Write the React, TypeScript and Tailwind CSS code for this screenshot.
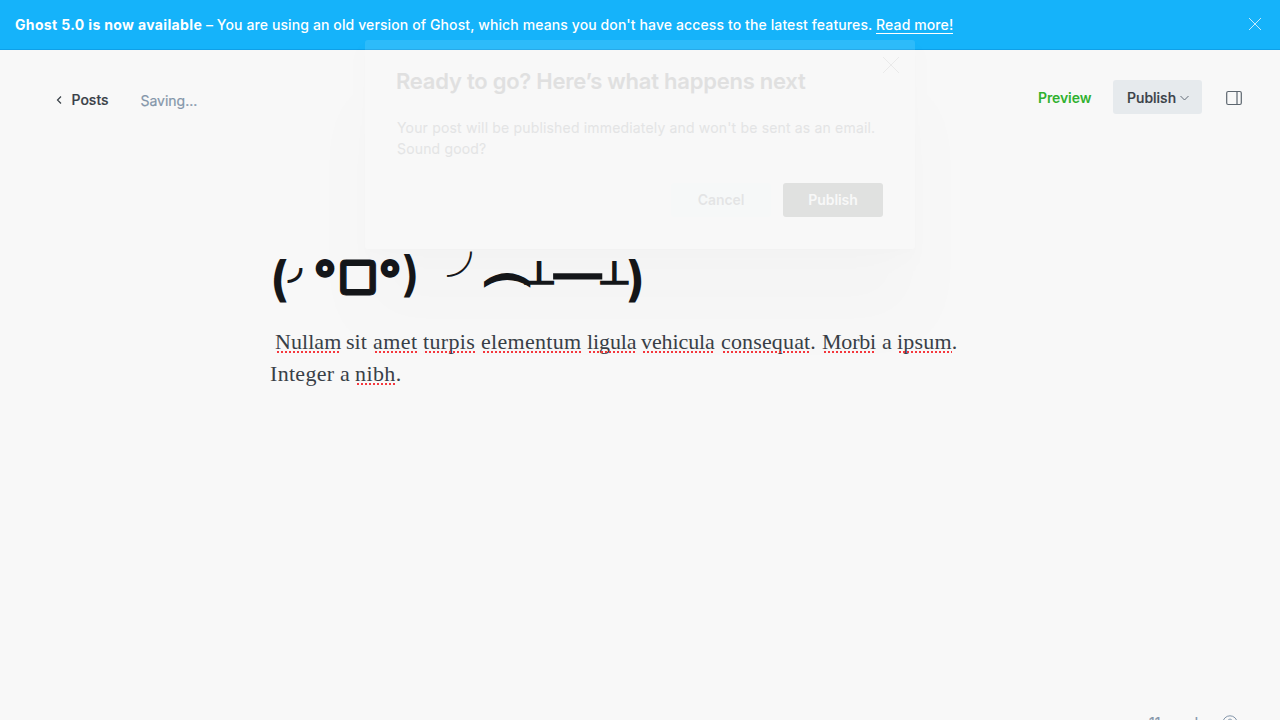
import type { ReactNode } from 'react';

function Word({ children, w, bad = false, end = '' }: { children: ReactNode; w: string; bad?: boolean; end?: string }) {
  return (
    <span className={`flex h-[22px] whitespace-pre ${w}`}>
      {bad ? (
        <span className="relative h-[22px]">{children}<span className="absolute top-[20px] right-0 left-[2px] h-[2px] bg-[repeating-linear-gradient(90deg,#f5383e_0_2px,transparent_2px_4px)]" /></span>
      ) : children}
      {end}
    </span>
  );
}

function CloseIcon({ className }: { className: string }) {
  return (
    <svg viewBox="0 0 16 16" className={className} fill="none" stroke="currentColor"><path d="M0 0 16 16M16 0 0 16" /></svg>
  );
}

export default function App() {
  return (
    <div className="relative h-[720px] w-[1280px] overflow-hidden bg-[#f8f8f8] font-['Inter',sans-serif] text-[#394047]">
      <div className="flex h-[50px] items-center justify-between border-b border-[#0fa0e8] bg-[#15b3fa] pl-[15px] pr-[19px] text-white">
        <p className="text-[14px] font-medium tracking-[0.11px] whitespace-nowrap"><b className="font-bold tracking-[0.35px]">Ghost 5.0 is now available</b> – You are using an old version of Ghost, which means you don't have access to the latest features. <span className="border-b border-white">Read more!</span></p>
        <CloseIcon className="mb-[2px] size-3 overflow-visible stroke-1" />
      </div>
      <header className="flex h-[98px] items-center justify-between pb-[2px] pl-[56px] pr-[38px] text-[14px]">
        <div className="flex items-center pt-[3px]">
          <svg viewBox="0 0 6 8" className="mt-[1px] mr-[9.5px] h-2 w-1.5" fill="none" stroke="#394047" strokeWidth="1.2"><path d="M5 .5 1.5 4 5 7.5" /></svg>
          <span className="w-[69px] font-medium [-webkit-text-stroke:0.2px]">Posts</span>
          <span className="pt-[2px] tracking-[-0.02px] text-[#8496aa] [-webkit-text-stroke:0.2px]">Saving...</span>
        </div>
        <div className="flex items-center pb-[2px]">
          <span className="w-[75px] font-semibold tracking-[-0.1px] text-[#30b12f]">Preview</span>
          <button className="mr-[24px] flex h-[34px] w-[89px] items-center rounded-[3px] bg-[#e6eaed] pl-[14px] font-medium [-webkit-text-stroke:0.2px]">Publish<svg viewBox="0 0 9 6" className="mt-[2px] ml-[3.5px] h-1.5 w-[9px]" fill="none" stroke="#626d79"><path d="m.5 1 4 4 4-4" /></svg></button>
          <svg viewBox="0 0 16 16" className="mt-[1px] size-4" fill="none" stroke="#5d666f" strokeWidth="1.2"><rect x=".7" y="1.5" width="14.6" height="13" rx="1.5" /><path d="M11 1.5v13" /></svg>
        </div>
      </header>
      <main className="ml-[270px] w-[750px] pt-[102px]">
        <h1 className="flex h-[58px] items-start text-[48px] leading-[58px] font-bold text-[#15171a]">
          <span className="w-[17px]">(</span>
          <span className="w-[24px] origin-top-left translate-x-[1px] translate-y-[-7px] scale-75">◞</span>
          <span className="w-[25px] translate-x-[3px] translate-y-[-1px] [-webkit-text-stroke:2px]">°</span>
          <span className="w-[42px] translate-y-[-1px] [-webkit-text-stroke:1px]">▢</span>
          <span className="w-[24px] translate-x-[1px] translate-y-[-1px] [-webkit-text-stroke:2px]">°</span>
          <span className="w-[43px] translate-y-[-5px] font-semibold">)</span>
          <span className="w-[38px] translate-x-[2px] translate-y-[-6px] font-['Noto_Sans_CJK_JP',sans-serif] font-normal">╯</span>
          <span className="w-[48px] origin-top-left translate-x-[2px] translate-y-[22px] scale-x-[0.96] [-webkit-text-stroke:1.5px]">⏜</span>
          <span className="w-[25px] origin-top-left translate-x-[-6px] translate-y-[10px] scale-x-[0.82] scale-y-[0.72] [-webkit-text-stroke:2.2px]">┴</span>
          <span className="w-[48px] origin-top-left translate-x-[-1px] translate-y-[7px] scale-x-[1.58] scale-y-[0.65]"><span className="block w-[29px]">━</span></span>
          <span className="w-[25px] origin-top-left translate-x-[-3px] translate-y-[10px] scale-x-[0.78] scale-y-[0.72] [-webkit-text-stroke:2.2px]">┴</span>
          <span className="translate-x-[-2px]">)</span>
        </h1>
        <div className="mt-[23px] font-['Liberation_Serif',serif] text-[22px] leading-[22px]">
          <p className="flex h-[32px] pl-[5px]">
            <Word w="w-[71px] tracking-[0.05px]" bad>Nullam</Word><Word w="w-[27px]">sit</Word><Word w="w-[50px] tracking-[0.45px]" bad>amet</Word><Word w="w-[58px] tracking-[0.35px]" bad>turpis</Word><Word w="w-[106px] tracking-[0.3px]" bad>elementum</Word><Word w="w-[54px] tracking-[-0.1px]" bad>ligula</Word><Word w="w-[80px] tracking-[-0.1px]" bad>vehicula</Word><Word w="w-[101px] tracking-[0.15px]" bad end=".">consequat</Word><Word w="w-[60px] tracking-[-0.2px]" bad>Morbi</Word><Word w="w-[15px]">a</Word><Word w="w-[60px] tracking-[0.2px]" bad end=".">ipsum</Word>
          </p>
          <p className="flex"><Word w="w-[70px] tracking-[0.3px]">Integer</Word><Word w="w-[15px]">a</Word><Word w="w-[50px] tracking-[0.4px]" bad end=".">nibh</Word></p>
        </div>
      </main>
      <footer className="absolute top-[713px] right-[42px] flex items-start text-[14px] leading-[18px] text-[#8496aa]">
        <span className="w-[73px] pt-[1px] tracking-[0.1px] [-webkit-text-stroke:0.2px]">11 words</span>
        <svg viewBox="0 0 16 16" className="mt-[2px] size-4" fill="none" stroke="currentColor"><circle cx="8" cy="8" r="7.2" /><path d="M5.8 6.2C5.8 3.5 10.2 3.5 10.2 6.2 10.2 8 8 7.8 8 9.7M8 11v1.2" /></svg>
      </footer>
      <section className="absolute top-[40px] left-[365px] h-[209px] w-[550px] rounded-[3px] bg-white pt-[28px] pr-8 pl-8 text-[#15171a] opacity-10 shadow-[0_3px_5px_rgba(0,0,0,0.04),0_12px_16px_rgba(0,0,0,0.07),0_70px_50px_-10px_rgba(0,0,0,0.11)]">
        <CloseIcon className="absolute top-[17px] right-[16px] size-4 overflow-visible stroke-[0.6]" />
        <h2 className="ml-[-1px] text-[22px] leading-[26px] font-semibold tracking-[-0.24px] whitespace-nowrap [-webkit-text-stroke:0.2px]">Ready to go? Here’s what happens next</h2>
        <p className="mt-[23px] text-[14px] leading-[21px] tracking-[0.17px] whitespace-nowrap text-[#394047] [-webkit-text-stroke:0.2px]">Your post will be published immediately and won't be sent as an email.<br />Sound good?</p>
        <div className="mt-[24px] flex justify-end gap-3 text-[14px] font-semibold">
          <button className="h-[34px] w-[100px] rounded-[3px] bg-[#e8fcf8] pb-[1px] tracking-[-0.05px] text-[#394047]">Cancel</button>
          <button className="h-[34px] w-[100px] rounded-[3px] bg-[#15201a] pb-[1px] tracking-[-0.05px] text-white">Publish</button>
        </div>
      </section>
    </div>
  );
}
